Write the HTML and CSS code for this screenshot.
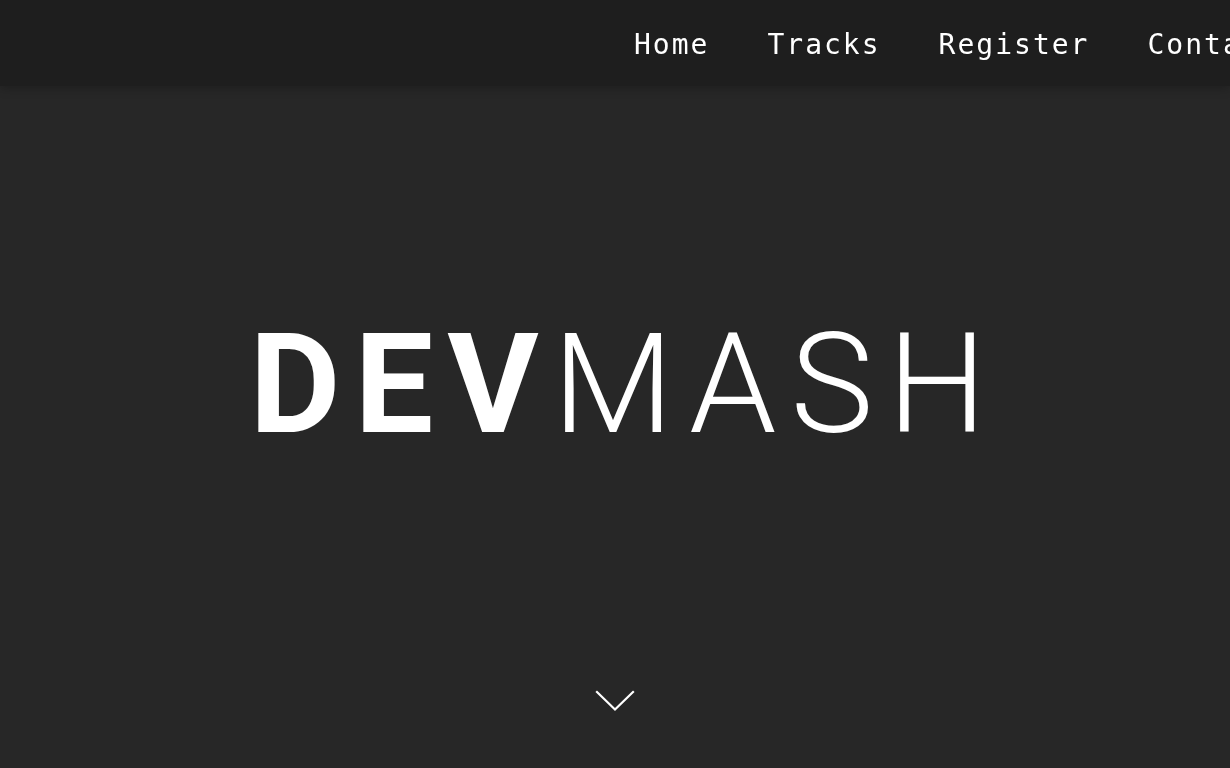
FILE: index.html
```html
<!DOCTYPE html>
<html lang="en">
<head>
<meta charset="utf-8">
<title>DevMash</title>
<link rel="stylesheet" href="styles.css">
</head>
<body>
<header class="topbar">
  <nav class="nav">
    <a class="nav-link" href="#">Home</a>
    <a class="nav-link" href="#">Tracks</a>
    <a class="nav-link" href="#">Register</a>
    <a class="nav-link" href="#">Contact</a>
  </nav>
</header>
<main class="hero">
  <h1 class="title"><span class="title-bold">DEV</span><span class="title-thin">MASH</span></h1>
  <a class="scroll-down" href="#" aria-label="Scroll down">
    <svg width="40" height="22" viewBox="0 0 40 22" fill="none" stroke="#fff" stroke-width="2.2" stroke-linecap="square">
      <polyline points="2,2 20,19.5 38,2"/>
    </svg>
  </a>
</main>
</body>
</html>
```
FILE: styles.css
```css
html, body {
  margin: 0;
  padding: 0;
}
body {
  background: #272727;
  color: #fff;
  overflow: hidden;
  font-family: Roboto, "Liberation Sans", sans-serif;
}
.topbar {
  position: fixed;
  top: 0;
  left: 0;
  right: 0;
  height: 86px;
  background: #1e1e1e;
  box-shadow: 0 2px 10px rgba(0, 0, 0, 0.25);
  z-index: 10;
}
.nav {
  display: flex;
  align-items: center;
  height: 100%;
  padding-top: 2px;
  box-sizing: border-box;
  padding-left: 604px;
  white-space: nowrap;
}
.nav-link {
  color: #fff;
  text-decoration: none;
  font-family: "DejaVu Sans Mono", "Liberation Mono", monospace;
  font-size: 28px;
  letter-spacing: 2px;
  padding: 0 28px 0 30px;
  flex-shrink: 0;
}
.hero {
  position: relative;
  height: 768px;
  display: flex;
  align-items: center;
  justify-content: center;
}
.title {
  margin: 0;
  padding-left: 20px;
  font-size: 140px;
  line-height: 1;
  letter-spacing: 14px;
  font-weight: 400;
  white-space: nowrap;
}
.title-bold {
  font-weight: 700;
}
.title-thin {
  font-weight: 300;
}
.scroll-down {
  position: absolute;
  left: 50%;
  bottom: 56px;
  transform: translateX(-50%);
  display: block;
  line-height: 0;
}
```
